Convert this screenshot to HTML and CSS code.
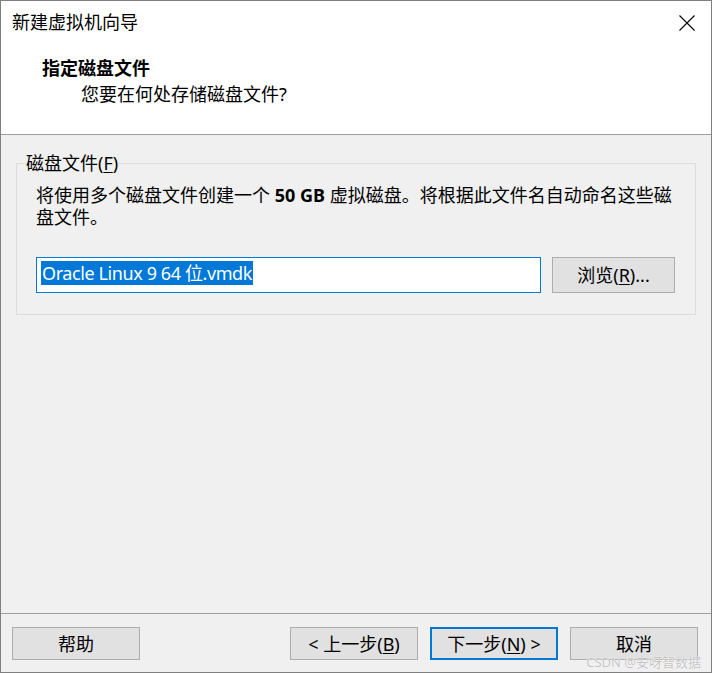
FILE: index.html
```html
<!DOCTYPE html>
<html lang="zh-CN">
<head>
<meta charset="utf-8">
<title>新建虚拟机向导</title>
<link rel="stylesheet" href="styles.css">
</head>
<body>
<div class="window">
  <header class="header">
    <div class="titlebar">
      <span class="title">新建虚拟机向导</span>
      <svg class="close" width="16" height="16" viewBox="0 0 16 16"><path d="M0.5 0.5 L15.5 15.5 M15.5 0.5 L0.5 15.5" stroke="#000" stroke-width="1.1" fill="none"/></svg>
    </div>
    <div class="heading">指定磁盘文件</div>
    <div class="subheading">您要在何处存储磁盘文件?</div>
  </header>
  <main class="body">
    <fieldset class="group">
      <legend class="legend">磁盘文件(<u>F</u>)</legend>
      <p class="desc">将使用多个磁盘文件创建一个 <b>50 GB</b> 虚拟磁盘。将根据此文件名自动命名这些磁<br>盘文件。</p>
      <div class="filerow">
        <div class="textbox"><span class="sel">Oracle Linux 9 64 位.vmdk</span></div>
        <div class="btn browse">浏览(<u>R</u>)...</div>
      </div>
    </fieldset>
  </main>
  <footer class="footer">
    <div class="btn">帮助</div>
    <div class="spacer"></div>
    <div class="btn">&lt; 上一步(<u>B</u>)</div>
    <div class="btn default">下一步(<u>N</u>) &gt;</div>
    <div class="btn">取消</div>
  </footer>
  <div class="watermark">CSDN @安呀智数据</div>
</div>
</body>
</html>
```
FILE: styles.css
```css
* { box-sizing: border-box; }
html, body { margin: 0; padding: 0; }
body {
  font-family: "Noto Sans", "Noto Sans CJK SC", sans-serif;
  font-size: 18px;
  color: #000;
  background: #f0f0f0;
}
.window {
  position: relative;
  width: 712px;
  height: 673px;
  border: 1px solid #7f7f7f;
  background: #f0f0f0;
  display: flex;
  flex-direction: column;
}
.header {
  height: 134px;
  background: #fff;
  border-bottom: 1px solid #a0a0a0;
  padding-top: 9px;
}
.titlebar {
  display: flex;
  justify-content: space-between;
  align-items: flex-start;
  padding-left: 11px;
  padding-right: 16px;
  line-height: 24px;
  height: 24px;
}
.close { margin-top: 5px; }
.heading {
  font-weight: bold;
  line-height: 24px;
  margin-top: 22px;
  padding-left: 41px;
}
.subheading {
  line-height: 24px;
  margin-top: 2px;
  padding-left: 80px;
}
.body {
  flex: 1;
  padding: 16px 15px 0 15px;
}
.group {
  margin: 0;
  border: 1px solid #dcdcdc;
  padding: 0 20px 21px 19px;
  min-width: 0;
}
.legend {
  line-height: 24px;
  padding: 0 1px;
  margin-left: -11px;
}
.legend u, .btn u { text-decoration-thickness: 1px; text-underline-offset: 2px; }
.desc {
  margin: 9px 0 0 0;
  line-height: 22px;
}
.desc b { font-weight: bold; }
.filerow {
  display: flex;
  gap: 11px;
  margin-top: 29px;
}
.textbox {
  flex: 1;
  height: 36px;
  background: #fff;
  border: 1px solid #0078d7;
  padding: 3px 0 0 4px;
}
.sel {
  display: inline-block;
  background: #0078d7;
  color: #fff;
  line-height: 24px;
  padding: 0 1px;
  letter-spacing: -0.4px;
}
.btn {
  width: 128px;
  height: 33px;
  background: #e1e1e1;
  border: 1px solid #adadad;
  display: flex;
  align-items: center;
  justify-content: center;
  line-height: 20px;
  white-space: nowrap;
}
.btn.browse {
  width: 123px;
  height: 36px;
}
.btn.default {
  border: 2px solid #0078d7;
}
.footer {
  border-top: 1px solid #a0a0a0;
  padding: 13px 13px 12px 11px;
  display: flex;
  gap: 12px;
  height: 59px;
}
.spacer { flex: 1; }
.watermark {
  position: absolute;
  right: 10px;
  bottom: 3px;
  font-size: 13px;
  line-height: 14px;
  color: #c4c4c4;
  text-shadow: 0 0 1px #fff, 0 0 1px #fff;
}
```
